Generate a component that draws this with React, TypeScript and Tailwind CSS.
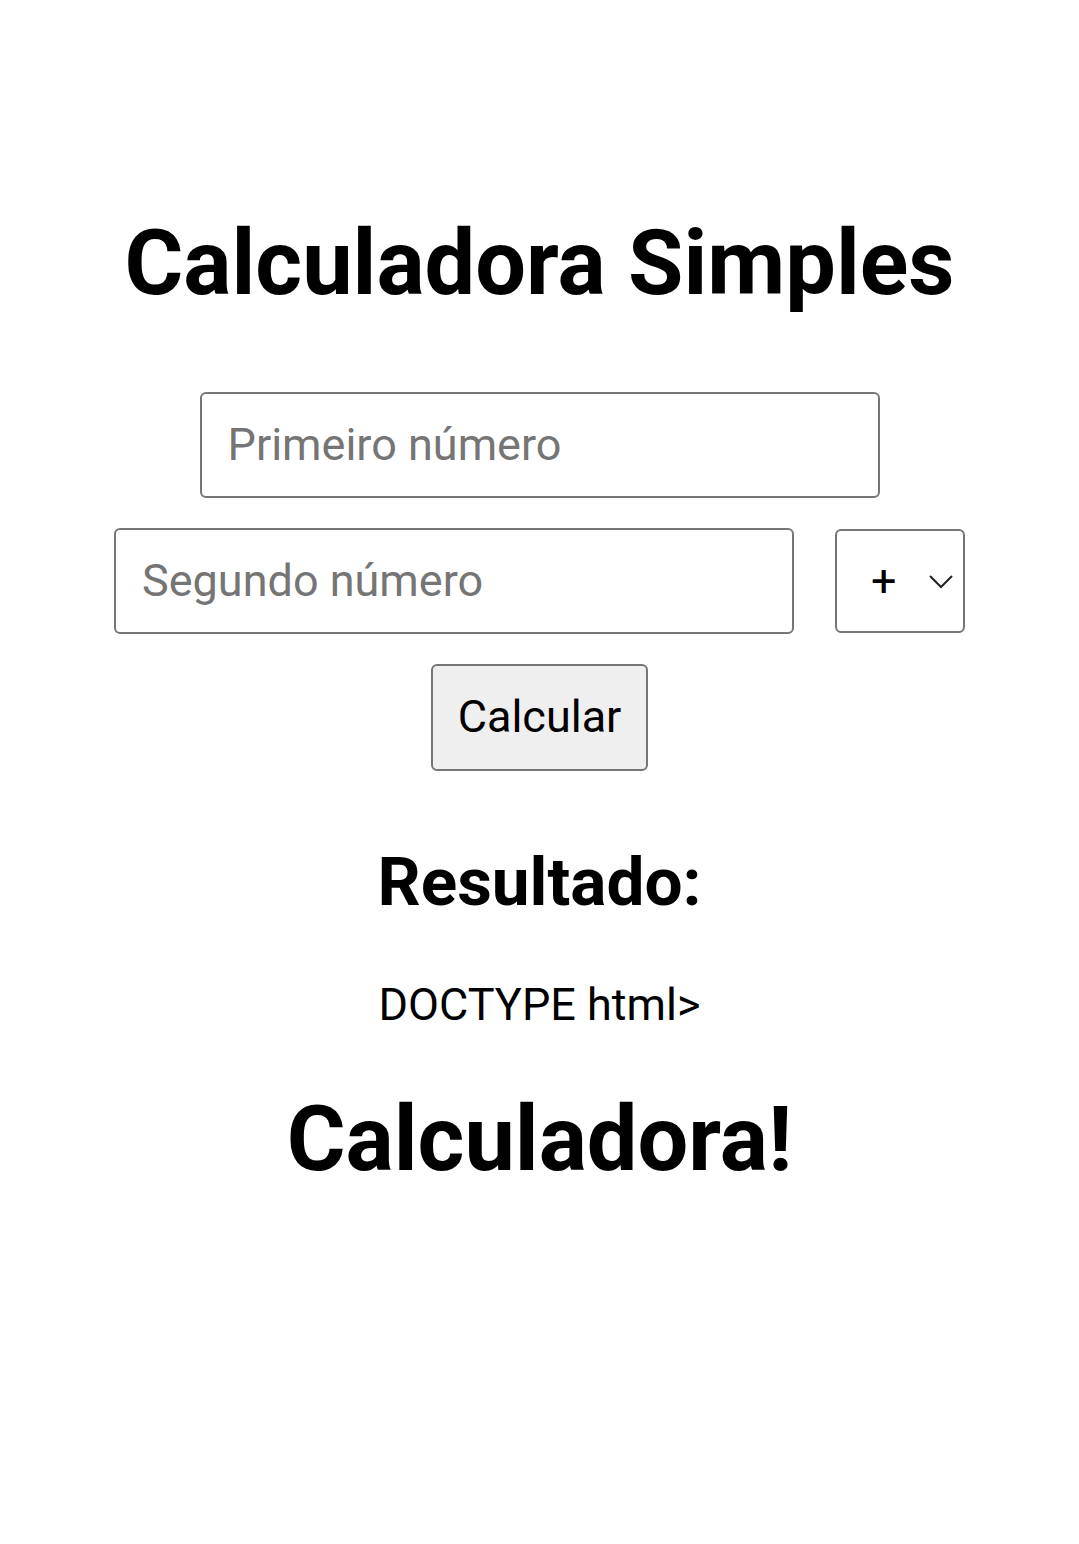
export default function App() {
  return (
    <div className="min-h-[1544px] bg-white text-black font-['Roboto',sans-serif] text-center pt-[212px]">
      <h1 className="text-[90px] font-bold leading-[1.15]">Calculadora Simples</h1>
      <div className="mt-[76px] flex flex-col items-center gap-[30px]">
        <input
          type="number"
          placeholder="Primeiro número"
          className="w-[680px] h-[106px] px-[26px] text-[45px] border-2 border-[#767676] rounded-[6px] placeholder:text-[#757575] outline-none"
        />
        <div className="flex items-center gap-[41px]">
          <input
            type="number"
            placeholder="Segundo número"
            className="w-[680px] h-[106px] px-[26px] text-[45px] border-2 border-[#767676] rounded-[6px] placeholder:text-[#757575] outline-none"
          />
          <div className="w-[130px] h-[104px] border-2 border-[#767676] rounded-[6px] flex items-center justify-between pl-[34px] pr-[9px]">
            <span className="text-[45px]">+</span>
            <svg width="26" height="16" viewBox="0 0 26 16" fill="none" stroke="#222" strokeWidth="2">
              <path d="M2 3l11 11L24 3" />
            </svg>
          </div>
        </div>
        <button className="w-[217px] h-[107px] text-[45px] bg-[#efefef] border-2 border-[#767676] rounded-[6px]">
          Calcular
        </button>
      </div>
      <h2 className="mt-[70px] text-[67.5px] font-bold leading-[1.2]">Resultado:</h2>
      <p className="mt-[56px] text-[45px] leading-[1.2]">DOCTYPE html&gt;</p>
      <h1 className="mt-[56px] text-[90px] font-bold leading-[1.15]">Calculadora!</h1>
    </div>
  );
}
